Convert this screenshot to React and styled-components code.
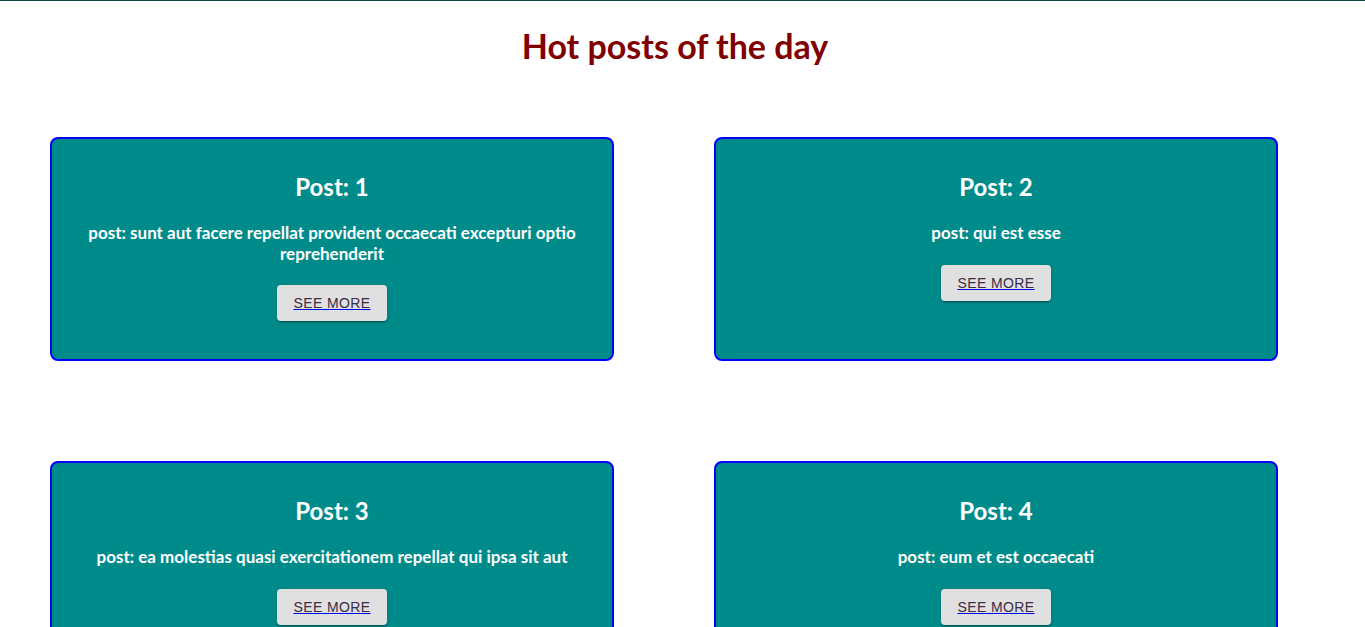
import React from 'react';
import styled, { createGlobalStyle } from 'styled-components';

const GlobalStyle = createGlobalStyle`
  html, body {
    margin: 0;
    padding: 0;
    background: #fff;
  }
  body {
    border-top: 1px solid #0b4640;
    font-family: Lato, "Open Sans", sans-serif;
  }
`;

const Page = styled.div`
  padding: 0 0 60px 50px;
`;

const Title = styled.h1`
  margin: 0;
  padding: 25px 65px 0 0;
  height: 110px;
  box-sizing: border-box;
  font-size: 34px;
  line-height: 40px;
  font-weight: 700;
  color: #800000;
  text-align: center;
`;

const Grid = styled.div`
  display: grid;
  grid-template-columns: 564px 564px;
  column-gap: 100px;
  row-gap: 100px;
  margin-top: 26px;
`;

const Card = styled.div`
  box-sizing: border-box;
  min-height: 224px;
  padding: 33px 24px 37px;
  background-color: darkcyan;
  border: 2px solid #0000ff;
  border-radius: 8px;
  text-align: center;
  color: #fff;
`;

const PostTitle = styled.h2`
  margin: 0 0 22px;
  font-size: 24px;
  line-height: 29px;
  font-weight: 700;
`;

const Body = styled.p`
  margin: 0 0 21px;
  font-size: 17px;
  line-height: 20.5px;
  font-weight: 700;
`;

const MoreButton = styled.button`
  height: 36px;
  padding: 0 16px;
  border: none;
  border-radius: 4px;
  background-color: #e0e0e0;
  box-shadow: 0 3px 1px -2px rgba(0, 0, 0, 0.2), 0 2px 2px 0 rgba(0, 0, 0, 0.14),
    0 1px 5px 0 rgba(0, 0, 0, 0.12);
  cursor: pointer;
`;

const MoreLink = styled.a`
  font-family: "Liberation Sans", Arial, sans-serif;
  font-size: 14px;
  letter-spacing: 0.4px;
  text-transform: uppercase;
  color: #3a2d45;
  text-decoration: underline;
  text-decoration-color: #0000ee;
`;

const posts = [
  { id: 1, title: 'sunt aut facere repellat provident occaecati excepturi optio reprehenderit' },
  { id: 2, title: 'qui est esse' },
  { id: 3, title: 'ea molestias quasi exercitationem repellat qui ipsa sit aut' },
  { id: 4, title: 'eum et est occaecati' },
];

const App = () => {
  return (
    <>
      <GlobalStyle />
      <Page>
        <Title>Hot posts of the day</Title>
        <Grid>
          {posts.map((post) => (
            <Card key={post.id}>
              <PostTitle>Post: {post.id}</PostTitle>
              <Body>post: {post.title}</Body>
              <MoreButton>
                <MoreLink href={`#post-${post.id}`}>See more</MoreLink>
              </MoreButton>
            </Card>
          ))}
        </Grid>
      </Page>
    </>
  );
};

export default App;
